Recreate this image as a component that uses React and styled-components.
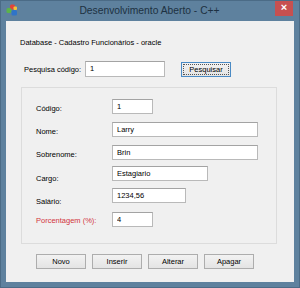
import styled, { createGlobalStyle } from "styled-components";

const GlobalStyle = createGlobalStyle`
  html, body {
    margin: 0;
    padding: 0;
    background: #5e819e;
  }
  * {
    box-sizing: border-box;
  }
`;

const fields = [
  { label: "Código:", value: "1", width: 41, top: 11, shift: 2 },
  { label: "Nome:", value: "Larry", width: 146, top: 8, shift: 2 },
  { label: "Sobrenome:", value: "Brin", width: 146, top: 8, shift: 2 },
  { label: "Cargo:", value: "Estagiario", width: 96, top: 6, shift: 5 },
  { label: "Salário:", value: "1234,56", width: 74, top: 7, shift: 6 },
  { label: "Porcentagem (%):", value: "4", width: 41, top: 9, shift: 1, alert: true },
];

const AppIcon = () => (
  <svg width="12" height="12" viewBox="0 0 12 12">
    <rect x="4" y="0.5" width="5" height="5" rx="1.5" fill="#e0443a" />
    <rect x="7.5" y="2.5" width="3.5" height="3.5" rx="1" fill="#f2c33a" />
    <rect x="0.5" y="4" width="5" height="5" rx="1.5" fill="#5cb44a" />
    <rect x="5.5" y="6" width="5.5" height="5.5" rx="1.5" fill="#2f74c8" />
  </svg>
);

const App = () => {
  return (
    <>
      <GlobalStyle />
      <Window>
        <TitleBar>
          <IconSlot>
            <AppIcon />
          </IconSlot>
          <Title>Desenvolvimento Aberto - C++</Title>
          <CloseButton>×</CloseButton>
        </TitleBar>

        <Client>
          <Header>Database - Cadastro Funcionários - oracle</Header>

          <SearchRow>
            <SearchLabel>Pesquisa código:</SearchLabel>
            <TextBox $width={80} $height={16} defaultValue="1" />
            <SearchButton>
              <span>Pesquisar</span>
            </SearchButton>
          </SearchRow>

          <GroupBox>
            {fields.map((f) => (
              <FieldRow key={f.label} $top={f.top}>
                <FieldLabel $shift={f.shift} $alert={f.alert}>
                  {f.label}
                </FieldLabel>
                <TextBox $width={f.width} $height={15} defaultValue={f.value} />
              </FieldRow>
            ))}
          </GroupBox>

          <ButtonBar>
            <Button>Novo</Button>
            <Button>Inserir</Button>
            <Button>Alterar</Button>
            <Button>Apagar</Button>
          </ButtonBar>
        </Client>
      </Window>
    </>
  );
};

export default App;

const Window = styled.div`
  width: 300px;
  height: 288px;
  background: #5e819e;
  border: 1px solid #4b6b86;
  font-family: "Liberation Sans", Arial, sans-serif;
  display: flex;
  flex-direction: column;
  overflow: hidden;
`;

const TitleBar = styled.div`
  height: 20px;
  display: flex;
  align-items: flex-start;
`;

const IconSlot = styled.div`
  width: 23px;
  padding: 3px 0 0 5px;
  display: flex;
`;

const Title = styled.div`
  flex: 1;
  text-align: center;
  font-size: 10.3px;
  line-height: 20px;
  color: #1d3142;
`;

const CloseButton = styled.div`
  width: 18px;
  height: 16px;
  margin: -1px 6px 0 0;
  background: #c75050;
  color: #fff;
  font-size: 11px;
  font-weight: bold;
  line-height: 15px;
  text-align: center;
`;

const Client = styled.div`
  margin: 0 5px;
  height: 261px;
  background: #f0f0f0;
  padding-top: 16px;
  display: flex;
  flex-direction: column;
  font-size: 7.5px;
  color: #000;
`;

const Header = styled.div`
  padding-left: 14px;
  line-height: 12px;
  height: 12px;
`;

const SearchRow = styled.div`
  margin-top: 12px;
  padding-left: 18px;
  display: flex;
  align-items: flex-start;
`;

const SearchLabel = styled.div`
  width: 61px;
  line-height: 17px;
`;

const TextBox = styled.input`
  width: ${(p) => p.$width}px;
  height: ${(p) => p.$height}px;
  border: 1px solid #b9b9b9;
  border-top-color: #a3a3a3;
  background: #fff;
  font: inherit;
  color: #000;
  padding: 0 0 1px 4px;
  margin: 0;
  outline: none;
`;

const Button = styled.button`
  width: 50px;
  height: 15px;
  border: 1px solid #adadad;
  background: linear-gradient(#f2f2f2, #e4e4e4);
  font: inherit;
  color: #000;
  padding: 0;
  margin: 0;
`;

const SearchButton = styled(Button)`
  margin: 1px 0 0 16px;
  border-color: #4a8ac4;
  padding: 1px;
  span {
    display: block;
    height: 100%;
    border: 1px dotted #555;
    line-height: 10px;
  }
`;

const GroupBox = styled.div`
  margin: 9px 0 0 15px;
  width: 256px;
  height: 157px;
  border: 1px solid #dcdcdc;
  padding-left: 14px;
  display: flex;
  flex-direction: column;
`;

const FieldRow = styled.div`
  margin-top: ${(p) => p.$top}px;
  height: 15px;
  flex-shrink: 0;
  display: flex;
  align-items: flex-start;
`;

const FieldLabel = styled.div`
  width: 76px;
  padding-top: ${(p) => p.$shift}px;
  line-height: 15px;
  color: ${(p) => (p.$alert ? "#d2323c" : "#000")};
`;

const ButtonBar = styled.div`
  margin: 10px 0 0 30px;
  display: flex;
  gap: 6px;
`;
